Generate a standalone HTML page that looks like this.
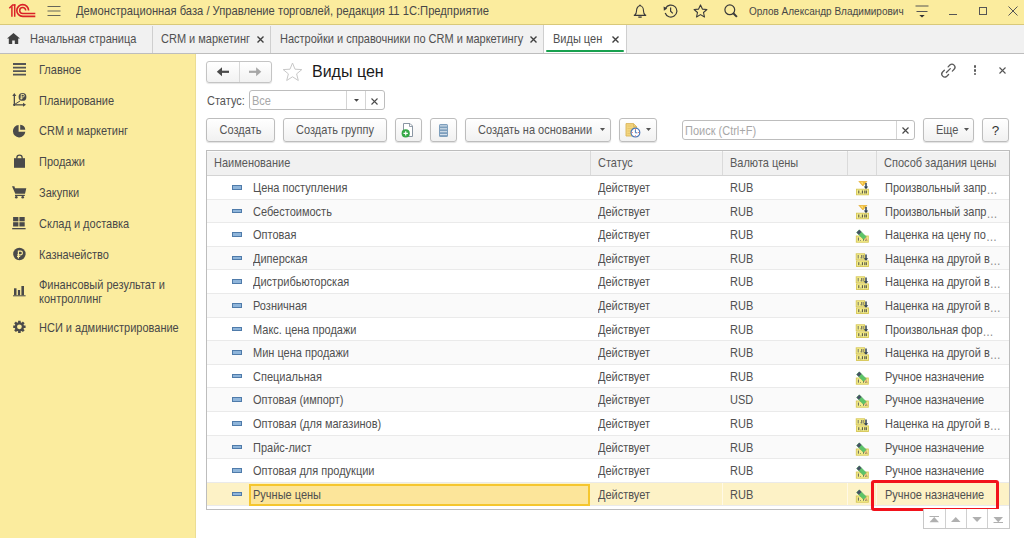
<!DOCTYPE html>
<html><head><meta charset="utf-8">
<style>
*{margin:0;padding:0;box-sizing:border-box}
html,body{width:1024px;height:538px;overflow:hidden;background:#fff;font-family:"Liberation Sans",sans-serif;font-size:11px;color:#4D4D4D}
.abs{position:absolute}
.ty{display:inline-block;transform:scaleY(1.12)}
#top{position:absolute;left:0;top:0;width:1024px;height:25px;background:#FBEC9E;border-bottom:1px solid #D9C97A}
#tabs{position:absolute;left:0;top:25px;width:1024px;height:29px;background:#F1F1F1;border-bottom:1px solid #BDBDBD}
.tab{position:absolute;top:0;height:28px;line-height:28px;white-space:nowrap;color:#505050;transform:scaleY(1.12)}
.sep{position:absolute;top:1px;width:1px;height:27px;background:#CFCFCF}
#side{position:absolute;left:0;top:54px;width:196px;height:484px;background:#FBEC9E;border-right:1px solid #EBDD95}
.si{position:absolute;left:39px;white-space:nowrap;line-height:13px;color:#484848;transform:scaleY(1.12)}
.sic{position:absolute;left:12px}
.btn{position:absolute;top:118px;height:24px;border:1px solid #BDBDBD;border-radius:3px;background:linear-gradient(#FFFFFF,#F1F1F1);box-shadow:0 1px 1px rgba(0,0,0,0.12);line-height:22px;text-align:center;white-space:nowrap;color:#555}
.row{position:absolute;left:207px;width:802px;border-bottom:1px solid #EAEAEA;white-space:nowrap;color:#505050}
.row span{position:absolute;top:1px;line-height:23px}
.ricon{left:25px;top:9px !important;width:10px;height:4.6px;background:#8FB5DA;border:1px solid #4F7BAA}
.c1,.c2,.c3,.c5{transform:scaleY(1.12)} .c1{left:46px} .c2{left:391px} .c3{left:523px} .c4{left:648px;top:5px !important;line-height:0 !important} .c5{left:678px}
.cur{position:absolute;left:42px;top:1px;width:341px;height:22px;background:#FCE59A;border:2px solid #F5C62E}
</style></head><body>
<div id="top">
  <svg class="abs" style="left:0;top:0" width="40" height="22" viewBox="0 0 40 22">
    <path d="M11.9 16.7V6.2M14.7 16.7V4.3" stroke="#DA2128" stroke-width="1.5" fill="none"/>
    <path d="M9.3 8.2L12.6 5h2.8" stroke="#DA2128" stroke-width="1.5" fill="none"/>
    <path d="M28.6 10.5A5.9 5.9 0 1 0 22.7 16.4H35.3" fill="none" stroke="#DA2128" stroke-width="1.6"/>
    <path d="M25.7 10.5A3.0 3.0 0 1 0 22.7 13.5H35.3" fill="none" stroke="#DA2128" stroke-width="1.5"/>
  </svg>
  <svg class="abs" style="left:47px;top:5px" width="14" height="12" viewBox="0 0 14 12"><path d="M0.5 1.5h13M0.5 6h13M0.5 10.5h13" stroke="#66665A" stroke-width="1.2"/></svg>
  <div class="abs ty" style="left:76px;top:0;line-height:23px;font-size:11.2px;color:#474747;white-space:nowrap">Демонстрационная база / Управление торговлей, редакция 11 1С:Предприятие</div>
  <svg class="abs" style="left:633px;top:4px" width="14" height="14" viewBox="0 0 14 14"><path d="M0.8 11.4h12.4M1.6 11.2c1.3-1 1.9-2 1.9-4.2 0-2.8 1.5-5.2 3.5-5.2s3.5 2.4 3.5 5.2c0 2.2.6 3.2 1.9 4.2" fill="none" stroke="#3A3A3A" stroke-width="1.1"/><path d="M5.3 13.1h3.4" stroke="#3A3A3A" stroke-width="1.3"/><path d="M6.2 1.3h1.6" stroke="#3A3A3A" stroke-width="1.2"/></svg>
  <svg class="abs" style="left:663px;top:4px" width="15" height="14" viewBox="0 0 15 14"><path d="M2.6 4.2A6 6 0 1 1 2.2 9" fill="none" stroke="#3A3A3A" stroke-width="1.2"/><path d="M0.6 2.6l3.6 1.9-3.3 2.2z" fill="#3A3A3A"/><path d="M7.6 3.6v3.6l2.2 2.2" fill="none" stroke="#3A3A3A" stroke-width="1.2"/></svg>
  <svg class="abs" style="left:693px;top:4px" width="15" height="14" viewBox="0 0 15 14"><path d="M7.5 0.9l1.9 4.2 4.5.4-3.4 3 1 4.5-4-2.4-4 2.4 1-4.5-3.4-3 4.5-.4z" fill="none" stroke="#3A3A3A" stroke-width="1.1" stroke-linejoin="round"/></svg>
  <svg class="abs" style="left:724px;top:4px" width="14" height="14" viewBox="0 0 14 14"><circle cx="5.8" cy="5.8" r="4.9" fill="none" stroke="#3A3A3A" stroke-width="1.2"/><path d="M9.3 9.3l3.6 3.6" stroke="#3A3A3A" stroke-width="2"/></svg>
  <div class="abs" style="left:749px;top:0;line-height:23px;font-size:10px;color:#474747;white-space:nowrap">Орлов Александр Владимирович</div>
  <svg class="abs" style="left:915px;top:5px" width="14" height="13" viewBox="0 0 14 13"><path d="M0.5 1h13M1.5 6.5h11" stroke="#555" stroke-width="1"/><path d="M4.3 10h5.4l-2.7 2.6z" fill="#333"/></svg>
  <div class="abs" style="left:949px;top:14px;width:8px;height:1px;background:#555"></div>
  <div class="abs" style="left:979px;top:7px;width:8px;height:8px;border:1px solid #555"></div>
  <svg class="abs" style="left:1008px;top:6px" width="10" height="10" viewBox="0 0 10 10"><path d="M0.5 0.5l9 9M9.5 0.5l-9 9" stroke="#555" stroke-width="1"/></svg>
</div>
<div id="tabs">
  <svg class="abs" style="left:7px;top:7.5px" width="13" height="11" viewBox="0 0 13 11"><path d="M6.5 0L0 5.6h1.8V11h3.4V7.6h2.6V11h3.4V5.6H13z" fill="#404040"/></svg>
  <div class="tab" style="left:30px">Начальная страница</div>
  <div class="sep" style="left:152px"></div>
  <div class="tab" style="left:161px">CRM и маркетинг</div>
  <svg class="abs" style="left:257px;top:10.5px" width="7" height="7" viewBox="0 0 7 7"><path d="M0.5 0.5l6 6M6.5 0.5l-6 6" stroke="#404040" stroke-width="1.4"/></svg>
  <div class="sep" style="left:270px"></div>
  <div class="tab" style="left:280px">Настройки и справочники по CRM и маркетингу</div>
  <svg class="abs" style="left:530px;top:10.5px" width="7" height="7" viewBox="0 0 7 7"><path d="M0.5 0.5l6 6M6.5 0.5l-6 6" stroke="#404040" stroke-width="1.4"/></svg>
  <div class="abs" style="left:543px;top:0;width:84px;height:28px;background:#fff;border-left:1px solid #CFCFCF;border-right:1px solid #CFCFCF"></div>
  <div class="abs" style="left:546px;top:25px;width:78px;height:2px;border-radius:1px;background:#17A04E"></div>
  <div class="tab" style="left:553px">Виды цен</div>
  <svg class="abs" style="left:612px;top:10.5px" width="7" height="7" viewBox="0 0 7 7"><path d="M0.5 0.5l6 6M6.5 0.5l-6 6" stroke="#404040" stroke-width="1.4"/></svg>
</div>
<div id="side">
  <svg class="sic" style="top:9px;left:13px" width="13" height="13" viewBox="0 0 13 13"><path d="M0 1h13M0 4.6h13M0 8.2h13M0 11.7h13" stroke="#555" stroke-width="1.8"/></svg>
  <div class="si" style="top:10px">Главное</div>
  <svg class="abs" style="left:0;top:0" width="40" height="300" viewBox="0 54 40 300">
    <g fill="#4A4A4A" stroke="none">
      <!-- planning -->
      <path d="M14.3 93l-2 3h4z"/><rect x="13.7" y="95" width="1.3" height="11"/>
      <path d="M26 104.8l-3-2v4z"/><rect x="13" y="104.2" width="10" height="1.3"/>
      <path d="M14.5 104.5l5.5-3.5" stroke="#4A4A4A" stroke-width="1"/>
      <circle cx="22.5" cy="96.9" r="3.9"/>
      <path d="M21.2 99.6v-5.2h1.8a1.3 1.3 0 0 1 0 2.6h-2.2M20.5 98.4h2" stroke="#FBEC9E" stroke-width="0.9" fill="none"/>
      <!-- pie -->
      <path d="M18.6 125a6.2 6.2 0 1 0 6.7 6.7h-6.7z"/>
      <path d="M20.2 124.7a5.4 5.4 0 0 1 5.1 5.1h-5.1z"/>
      <!-- bag -->
      <rect x="14" y="158.2" width="11" height="9.6"/>
      <path d="M16.8 159.5v-1.6a2.7 2.7 0 0 1 5.4 0v1.6" fill="none" stroke="#4A4A4A" stroke-width="1.3"/>
      <!-- cart -->
      <path d="M12 186.2h2.4l0.6 2h11.3l-1.3 5.6H15.3z"/>
      <rect x="15" y="194.8" width="9.8" height="1.2"/>
      <circle cx="16.3" cy="197.3" r="1.3"/><circle cx="22.7" cy="197.3" r="1.3"/>
      <!-- warehouse -->
      <rect x="13.1" y="217" width="5.3" height="4.3"/><rect x="19.4" y="217" width="5.3" height="4.3"/>
      <rect x="13.1" y="222.2" width="5.3" height="4.3"/><rect x="19.4" y="222.2" width="5.3" height="4.3"/>
      <rect x="12.2" y="228" width="13.4" height="1.3"/>
      <!-- ruble -->
      <circle cx="19.4" cy="254" r="6.2"/>
      <path d="M18.4 258.5v-7.3h2.2a1.8 1.8 0 0 1 0 3.6h-3.3M17 256.5h3.2" stroke="#FBEC9E" stroke-width="1.2" fill="none"/>
      <!-- chart -->
      <rect x="14" y="288.3" width="2.5" height="7"/><rect x="17.9" y="290" width="2.2" height="5.3"/><rect x="21.4" y="286" width="2.6" height="9.3"/>
      <rect x="13" y="295.3" width="12.6" height="1"/>
      <!-- gear -->
      <path d="M18.09 322.29 L18.12 320.63 L20.68 320.63 L20.71 322.29 L21.66 322.68 L22.86 321.53 L24.67 323.34 L23.52 324.54 L23.91 325.49 L25.57 325.52 L25.57 328.08 L23.91 328.11 L23.52 329.06 L24.67 330.26 L22.86 332.07 L21.66 330.92 L20.71 331.31 L20.68 332.97 L18.12 332.97 L18.09 331.31 L17.14 330.92 L15.94 332.07 L14.13 330.26 L15.28 329.06 L14.89 328.11 L13.23 328.08 L13.23 325.52 L14.89 325.49 L15.28 324.54 L14.13 323.34 L15.94 321.53 L17.14 322.68z"/>
      <circle cx="19.4" cy="326.8" r="2.4" fill="#FBEC9E"/>
    </g>
  </svg>
  <div class="si" style="top:41px">Планирование</div>
  <div class="si" style="top:71px">CRM и маркетинг</div>
  <div class="si" style="top:102px">Продажи</div>
  <div class="si" style="top:133px">Закупки</div>
  <div class="si" style="top:164px">Склад и доставка</div>
  <div class="si" style="top:195px">Казначейство</div>
  <div class="si" style="top:225px">Финансовый результат и<br>контроллинг</div>
  <div class="si" style="top:268px">НСИ и администрирование</div>
</div>
<!-- form header -->
<div class="abs" style="left:206px;top:61px;width:66px;height:22px;border:1px solid #C4C4C4;border-radius:3px;background:linear-gradient(#FFFFFF,#F2F2F2);box-shadow:0 1px 1px rgba(0,0,0,0.1)"></div>
<div class="abs" style="left:239px;top:62px;width:1px;height:20px;background:#D8D8D8"></div>
<svg class="abs" style="left:204px;top:58px" width="72" height="28" viewBox="204 58 72 28"><path d="M221 71.8h8" stroke="#4A4A4A" stroke-width="2.2"/><path d="M216.8 71.8l5.2-4.5v9z" fill="#4A4A4A"/><path d="M249 71.8h8" stroke="#A6A6A6" stroke-width="2.2"/><path d="M261.3 71.8l-5.2-4.5v9z" fill="#A6A6A6"/></svg>
<svg class="abs" style="left:282px;top:62px" width="21" height="20" viewBox="0 0 21 20"><path d="M10.5 1l2.5 6.2 6.8.4-5.2 4.3 1.7 6.6-5.8-3.7-5.8 3.7 1.7-6.6L1.2 7.6l6.8-.4z" fill="none" stroke="#C8C8C8" stroke-width="1" stroke-linejoin="round"/></svg>
<div class="abs" style="left:312px;top:60px;font-size:16px;line-height:24px;color:#1A1A1A;white-space:nowrap">Виды цен</div>
<svg class="abs" style="left:936px;top:60px" width="24" height="22" viewBox="936 60 24 22"><path d="M948.11 66.85L949.88 65.08A3.0 3.0 0 0 1 954.12 69.32L952.35 71.09 M948.59 74.45L946.82 76.22A3.0 3.0 0 0 1 942.58 71.98L944.35 70.21 M946.4 72.5L950.3 68.6" fill="none" stroke="#5A5A5A" stroke-width="1.3" stroke-linecap="round"/></svg>
<div class="abs" style="left:973.5px;top:65.2px;width:2.7px;height:2.7px;border-radius:2px;background:#5A5A5A"></div>
<div class="abs" style="left:973.5px;top:69px;width:2.7px;height:2.7px;border-radius:2px;background:#5A5A5A"></div>
<div class="abs" style="left:973.5px;top:72.8px;width:2.7px;height:2.7px;border-radius:2px;background:#5A5A5A"></div>
<svg class="abs" style="left:999px;top:67px" width="7" height="7" viewBox="0 0 7 7"><path d="M0.5 0.5l6 6M6.5 0.5l-6 6" stroke="#555" stroke-width="1.1"/></svg>
<!-- status filter -->
<div class="abs ty" style="left:207px;top:93px;line-height:16px;white-space:nowrap;color:#555">Статус:</div>
<div class="abs" style="left:249px;top:90px;width:136px;height:20px;border:1px solid #BDBDBD;border-radius:3px;background:#fff"></div>
<div class="abs ty" style="left:252px;top:92px;line-height:18px;color:#A8A8A8;white-space:nowrap">Все</div>
<div class="abs" style="left:346px;top:91px;width:1px;height:18px;background:#D4D4D4"></div>
<div class="abs" style="left:365px;top:91px;width:1px;height:18px;background:#D4D4D4"></div>
<svg class="abs" style="left:353.5px;top:99.2px" width="5" height="3" viewBox="0 0 5 3"><path d="M0 0h5L2.5 2.8z" fill="#444"/></svg>
<svg class="abs" style="left:371px;top:97.5px" width="7" height="7" viewBox="0 0 7 7"><path d="M0.5 0.5l6 6M6.5 0.5l-6 6" stroke="#4A4A4A" stroke-width="1.1"/></svg>
<!-- toolbar -->
<div class="btn" style="left:206px;width:69px"><span class="ty">Создать</span></div>
<div class="btn" style="left:283px;width:104px"><span class="ty">Создать группу</span></div>
<div class="btn" style="left:395px;width:27px"></div>
<svg class="abs" style="left:400px;top:122px" width="16" height="17" viewBox="0 0 16 17"><path d="M3.5 1.5h6.5l2.5 2.5v10.5h-9z" fill="#fff" stroke="#8A96A3" stroke-width="1"/><path d="M9.5 1.5v3h3" fill="none" stroke="#8A96A3" stroke-width="0.9"/><circle cx="5.7" cy="11.4" r="4.1" fill="#34A846"/><path d="M5.7 9.2v4.4M3.5 11.4h4.4" stroke="#fff" stroke-width="1.2"/></svg>
<div class="btn" style="left:430px;width:27px"></div>
<svg class="abs" style="left:439px;top:124px" width="9" height="13" viewBox="0 0 9 13"><rect x="0" y="0" width="9" height="13" rx="1.5" fill="#7E9FBD"/><path d="M1 1.9h7M1 4.8h7M1 7.7h7M1 10.6h7" stroke="#E6EEF5" stroke-width="0.9"/></svg>
<div class="btn" style="left:465px;width:146px;text-align:left;padding-left:12px"><span class="ty">Создать на основании</span></div>
<svg class="abs" style="left:600px;top:128px" width="5" height="3" viewBox="0 0 5 3"><path d="M0 0h5L2.5 3z" fill="#555"/></svg>
<div class="btn" style="left:619px;width:38px"></div>
<svg class="abs" style="left:625px;top:123px" width="16" height="15" viewBox="0 0 16 15"><path d="M1 0.6h7.5l3 3v9.4H1z" fill="#F3D57E" stroke="#D9B45A" stroke-width="0.9"/><path d="M8.5 0.6v3h3" fill="none" stroke="#D9B45A" stroke-width="0.8"/><path d="M2.5 3h4M2.5 5.5h6M2.5 8h5M2.5 10.5h3" stroke="#E3C26A" stroke-width="0.8"/><circle cx="10.4" cy="9.6" r="4.4" fill="#fff" stroke="#4A78B8" stroke-width="1.2"/><path d="M10.4 7v2.8h2" fill="none" stroke="#4A78B8" stroke-width="1"/><circle cx="10.4" cy="6.4" r="0.5" fill="#E04040"/><circle cx="10.4" cy="12.8" r="0.5" fill="#E04040"/><circle cx="7.2" cy="9.6" r="0.5" fill="#E04040"/><circle cx="13.6" cy="9.6" r="0.5" fill="#E04040"/></svg>
<svg class="abs" style="left:646px;top:128px" width="5" height="3" viewBox="0 0 5 3"><path d="M0 0h5L2.5 3z" fill="#555"/></svg>
<div class="abs" style="left:682px;top:120px;width:233px;height:20px;border:1px solid #BDBDBD;border-radius:3px;background:#fff"></div>
<div class="abs ty" style="left:685px;top:122px;line-height:18px;color:#A8A8A8;white-space:nowrap">Поиск (Ctrl+F)</div>
<div class="abs" style="left:896px;top:121px;width:1px;height:18px;background:#D4D4D4"></div>
<svg class="abs" style="left:902px;top:127px" width="7" height="7" viewBox="0 0 7 7"><path d="M0.5 0.5l6 6M6.5 0.5l-6 6" stroke="#4A4A4A" stroke-width="1.2"/></svg>
<div class="btn" style="left:923px;width:51px;text-align:left;padding-left:12px"><span class="ty">Еще</span></div>
<svg class="abs" style="left:964px;top:128px" width="5" height="3" viewBox="0 0 5 3"><path d="M0 0h5L2.5 3z" fill="#555"/></svg>
<div class="btn" style="left:982px;width:27px;color:#333;font-size:13.5px;line-height:23px">?</div>
<!-- table -->
<div class="abs" style="left:206px;top:150px;width:804px;height:360px;border:1px solid #BDBDBD;background:#fff"></div>
<div class="abs" style="left:207px;top:151px;width:802px;height:25px;background:#F1F1F1;border-top:1px solid #FAFAFA;border-bottom:1px solid #D4D4D4"></div>
<div class="abs" style="left:590px;top:151px;width:1px;height:24px;background:#DADADA"></div>
<div class="abs" style="left:722px;top:151px;width:1px;height:24px;background:#DADADA"></div>
<div class="abs" style="left:847px;top:151px;width:1px;height:24px;background:#DADADA"></div>
<div class="abs" style="left:876px;top:151px;width:1px;height:24px;background:#DADADA"></div>
<div class="abs" style="left:214px;top:151px;line-height:24px;white-space:nowrap;color:#595959;transform:scaleY(1.12)">Наименование</div>
<div class="abs" style="left:598px;top:151px;line-height:24px;white-space:nowrap;color:#595959;transform:scaleY(1.12)">Статус</div>
<div class="abs" style="left:730px;top:151px;line-height:24px;white-space:nowrap;color:#595959;transform:scaleY(1.12)">Валюта цены</div>
<div class="abs" style="left:884px;top:151px;line-height:24px;white-space:nowrap;color:#595959;transform:scaleY(1.12)">Способ задания цены</div>
<div class="row" style="top:176.00px;height:23.60px;background:#FFFFFF">
<span class="ricon"></span>
<span class="c1">Цена поступления</span><span class="c2">Действует</span><span class="c3">RUB</span><span class="c4"><svg width="14" height="15" viewBox="0 0 14 15"><path d="M3.8 0.3h8.2L7.9 5z" fill="#F3C13A" stroke="#E0A830" stroke-width="0.6"/><path d="M7.9 1.3L5.6 1.3 7.9 3.6z" fill="#FBE38A"/><rect x="1.5" y="8.2" width="12" height="5.6" fill="#F4EE8C" stroke="#D6C655" stroke-width="0.9"/><path d="M11 2v4.5" stroke="#2F4050" stroke-width="1.5"/><path d="M8.8 5.6h4.4L11 8.2z" fill="#2F4050"/><path d="M3.8 9.5v3M5.6 12.3h.6M7.4 9.5v3M9.8 9.5v3M11.3 9.5v3" stroke="#3A3A3A" stroke-width="0.9"/></svg></span><span class="c5">Произвольный запр<span style="color:#8A8A8A">…</span></span>
</div>
<div class="row" style="top:199.60px;height:23.60px;background:#FAFAFA">
<span class="ricon"></span>
<span class="c1">Себестоимость</span><span class="c2">Действует</span><span class="c3">RUB</span><span class="c4"><svg width="14" height="15" viewBox="0 0 14 15"><path d="M3.8 0.3h8.2L7.9 5z" fill="#F3C13A" stroke="#E0A830" stroke-width="0.6"/><path d="M7.9 1.3L5.6 1.3 7.9 3.6z" fill="#FBE38A"/><rect x="1.5" y="8.2" width="12" height="5.6" fill="#F4EE8C" stroke="#D6C655" stroke-width="0.9"/><path d="M11 2v4.5" stroke="#2F4050" stroke-width="1.5"/><path d="M8.8 5.6h4.4L11 8.2z" fill="#2F4050"/><path d="M3.8 9.5v3M5.6 12.3h.6M7.4 9.5v3M9.8 9.5v3M11.3 9.5v3" stroke="#3A3A3A" stroke-width="0.9"/></svg></span><span class="c5">Произвольный запр<span style="color:#8A8A8A">…</span></span>
</div>
<div class="row" style="top:223.20px;height:23.60px;background:#FFFFFF">
<span class="ricon"></span>
<span class="c1">Оптовая</span><span class="c2">Действует</span><span class="c3">RUB</span><span class="c4"><svg width="14" height="15" viewBox="0 0 14 15"><rect x="1.3" y="8" width="12" height="6.2" fill="#F4EE8C" stroke="#D6C655" stroke-width="0.9"/><path d="M3.4 9.5v3.2M5.4 12.5h.6M8.5 11v1.7M10.5 11v1.7" stroke="#555" stroke-width="0.9"/><path d="M4.3 1.8L1.6 4.5 8.7 11.6 11.4 8.9z" fill="#5CC468" stroke="#45A552" stroke-width="0.5"/><path d="M4.3 1.8L1.6 4.5 3.8 6.7 6.5 4z" fill="#475266"/><path d="M8.7 11.6L11.4 8.9 12.9 13.1z" fill="#E3B878"/><path d="M11.6 11.4l0.8 1.2-1.2-.4z" fill="#333"/></svg></span><span class="c5">Наценка на цену по<span style="color:#8A8A8A">…</span></span>
</div>
<div class="row" style="top:246.80px;height:23.60px;background:#FAFAFA">
<span class="ricon"></span>
<span class="c1">Диперская</span><span class="c2">Действует</span><span class="c3">RUB</span><span class="c4"><svg width="14" height="15" viewBox="0 0 14 15"><rect x="1.2" y="1.8" width="8.4" height="6" fill="#F4EE8C" stroke="#D6C655" stroke-width="0.9"/><path d="M3.2 3v3.5M5 5.8h.6M6.6 3v3.5M8.2 3v3.5" stroke="#555" stroke-width="0.8"/><rect x="1.5" y="8.9" width="12" height="5.6" fill="#F4EE8C" stroke="#D6C655" stroke-width="0.9"/><path d="M3.8 10.2v3M5.6 13h.6M7.4 10.2v3M9.8 10.2v3M11.3 10.2v3" stroke="#3A3A3A" stroke-width="0.9"/><path d="M11 2.6v4.5" stroke="#2F4050" stroke-width="1.5"/><path d="M8.8 6.2h4.4L11 8.8z" fill="#2F4050"/></svg></span><span class="c5">Наценка на другой в<span style="color:#8A8A8A">…</span></span>
</div>
<div class="row" style="top:270.40px;height:23.60px;background:#FFFFFF">
<span class="ricon"></span>
<span class="c1">Дистрибьюторская</span><span class="c2">Действует</span><span class="c3">RUB</span><span class="c4"><svg width="14" height="15" viewBox="0 0 14 15"><rect x="1.2" y="1.8" width="8.4" height="6" fill="#F4EE8C" stroke="#D6C655" stroke-width="0.9"/><path d="M3.2 3v3.5M5 5.8h.6M6.6 3v3.5M8.2 3v3.5" stroke="#555" stroke-width="0.8"/><rect x="1.5" y="8.9" width="12" height="5.6" fill="#F4EE8C" stroke="#D6C655" stroke-width="0.9"/><path d="M3.8 10.2v3M5.6 13h.6M7.4 10.2v3M9.8 10.2v3M11.3 10.2v3" stroke="#3A3A3A" stroke-width="0.9"/><path d="M11 2.6v4.5" stroke="#2F4050" stroke-width="1.5"/><path d="M8.8 6.2h4.4L11 8.8z" fill="#2F4050"/></svg></span><span class="c5">Наценка на другой в<span style="color:#8A8A8A">…</span></span>
</div>
<div class="row" style="top:294.00px;height:23.60px;background:#FAFAFA">
<span class="ricon"></span>
<span class="c1">Розничная</span><span class="c2">Действует</span><span class="c3">RUB</span><span class="c4"><svg width="14" height="15" viewBox="0 0 14 15"><rect x="1.2" y="1.8" width="8.4" height="6" fill="#F4EE8C" stroke="#D6C655" stroke-width="0.9"/><path d="M3.2 3v3.5M5 5.8h.6M6.6 3v3.5M8.2 3v3.5" stroke="#555" stroke-width="0.8"/><rect x="1.5" y="8.9" width="12" height="5.6" fill="#F4EE8C" stroke="#D6C655" stroke-width="0.9"/><path d="M3.8 10.2v3M5.6 13h.6M7.4 10.2v3M9.8 10.2v3M11.3 10.2v3" stroke="#3A3A3A" stroke-width="0.9"/><path d="M11 2.6v4.5" stroke="#2F4050" stroke-width="1.5"/><path d="M8.8 6.2h4.4L11 8.8z" fill="#2F4050"/></svg></span><span class="c5">Наценка на другой в<span style="color:#8A8A8A">…</span></span>
</div>
<div class="row" style="top:317.60px;height:23.60px;background:#FFFFFF">
<span class="ricon"></span>
<span class="c1">Макс. цена продажи</span><span class="c2">Действует</span><span class="c3">RUB</span><span class="c4"><svg width="14" height="15" viewBox="0 0 14 15"><rect x="1.2" y="1.8" width="8.4" height="6" fill="#F4EE8C" stroke="#D6C655" stroke-width="0.9"/><path d="M3.2 3v3.5M5 5.8h.6M6.6 3v3.5M8.2 3v3.5" stroke="#555" stroke-width="0.8"/><rect x="1.5" y="8.9" width="12" height="5.6" fill="#F4EE8C" stroke="#D6C655" stroke-width="0.9"/><path d="M3.8 10.2v3M5.6 13h.6M7.4 10.2v3M9.8 10.2v3M11.3 10.2v3" stroke="#3A3A3A" stroke-width="0.9"/><path d="M11 2.6v4.5" stroke="#2F4050" stroke-width="1.5"/><path d="M8.8 6.2h4.4L11 8.8z" fill="#2F4050"/></svg></span><span class="c5">Произвольная фор<span style="color:#8A8A8A">…</span></span>
</div>
<div class="row" style="top:341.20px;height:23.60px;background:#FAFAFA">
<span class="ricon"></span>
<span class="c1">Мин цена продажи</span><span class="c2">Действует</span><span class="c3">RUB</span><span class="c4"><svg width="14" height="15" viewBox="0 0 14 15"><rect x="1.2" y="1.8" width="8.4" height="6" fill="#F4EE8C" stroke="#D6C655" stroke-width="0.9"/><path d="M3.2 3v3.5M5 5.8h.6M6.6 3v3.5M8.2 3v3.5" stroke="#555" stroke-width="0.8"/><rect x="1.5" y="8.9" width="12" height="5.6" fill="#F4EE8C" stroke="#D6C655" stroke-width="0.9"/><path d="M3.8 10.2v3M5.6 13h.6M7.4 10.2v3M9.8 10.2v3M11.3 10.2v3" stroke="#3A3A3A" stroke-width="0.9"/><path d="M11 2.6v4.5" stroke="#2F4050" stroke-width="1.5"/><path d="M8.8 6.2h4.4L11 8.8z" fill="#2F4050"/></svg></span><span class="c5">Наценка на другой в<span style="color:#8A8A8A">…</span></span>
</div>
<div class="row" style="top:364.80px;height:23.60px;background:#FFFFFF">
<span class="ricon"></span>
<span class="c1">Специальная</span><span class="c2">Действует</span><span class="c3">RUB</span><span class="c4"><svg width="14" height="15" viewBox="0 0 14 15"><rect x="1.3" y="8" width="12" height="6.2" fill="#F4EE8C" stroke="#D6C655" stroke-width="0.9"/><path d="M3.4 9.5v3.2M5.4 12.5h.6M8.5 11v1.7M10.5 11v1.7" stroke="#555" stroke-width="0.9"/><path d="M4.3 1.8L1.6 4.5 8.7 11.6 11.4 8.9z" fill="#5CC468" stroke="#45A552" stroke-width="0.5"/><path d="M4.3 1.8L1.6 4.5 3.8 6.7 6.5 4z" fill="#475266"/><path d="M8.7 11.6L11.4 8.9 12.9 13.1z" fill="#E3B878"/><path d="M11.6 11.4l0.8 1.2-1.2-.4z" fill="#333"/></svg></span><span class="c5">Ручное назначение</span>
</div>
<div class="row" style="top:388.40px;height:23.60px;background:#FAFAFA">
<span class="ricon"></span>
<span class="c1">Оптовая (импорт)</span><span class="c2">Действует</span><span class="c3">USD</span><span class="c4"><svg width="14" height="15" viewBox="0 0 14 15"><rect x="1.3" y="8" width="12" height="6.2" fill="#F4EE8C" stroke="#D6C655" stroke-width="0.9"/><path d="M3.4 9.5v3.2M5.4 12.5h.6M8.5 11v1.7M10.5 11v1.7" stroke="#555" stroke-width="0.9"/><path d="M4.3 1.8L1.6 4.5 8.7 11.6 11.4 8.9z" fill="#5CC468" stroke="#45A552" stroke-width="0.5"/><path d="M4.3 1.8L1.6 4.5 3.8 6.7 6.5 4z" fill="#475266"/><path d="M8.7 11.6L11.4 8.9 12.9 13.1z" fill="#E3B878"/><path d="M11.6 11.4l0.8 1.2-1.2-.4z" fill="#333"/></svg></span><span class="c5">Ручное назначение</span>
</div>
<div class="row" style="top:412.00px;height:23.60px;background:#FFFFFF">
<span class="ricon"></span>
<span class="c1">Оптовая (для магазинов)</span><span class="c2">Действует</span><span class="c3">RUB</span><span class="c4"><svg width="14" height="15" viewBox="0 0 14 15"><rect x="1.2" y="1.8" width="8.4" height="6" fill="#F4EE8C" stroke="#D6C655" stroke-width="0.9"/><path d="M3.2 3v3.5M5 5.8h.6M6.6 3v3.5M8.2 3v3.5" stroke="#555" stroke-width="0.8"/><rect x="1.5" y="8.9" width="12" height="5.6" fill="#F4EE8C" stroke="#D6C655" stroke-width="0.9"/><path d="M3.8 10.2v3M5.6 13h.6M7.4 10.2v3M9.8 10.2v3M11.3 10.2v3" stroke="#3A3A3A" stroke-width="0.9"/><path d="M11 2.6v4.5" stroke="#2F4050" stroke-width="1.5"/><path d="M8.8 6.2h4.4L11 8.8z" fill="#2F4050"/></svg></span><span class="c5">Наценка на другой в<span style="color:#8A8A8A">…</span></span>
</div>
<div class="row" style="top:435.60px;height:23.60px;background:#FAFAFA">
<span class="ricon"></span>
<span class="c1">Прайс-лист</span><span class="c2">Действует</span><span class="c3">RUB</span><span class="c4"><svg width="14" height="15" viewBox="0 0 14 15"><rect x="1.3" y="8" width="12" height="6.2" fill="#F4EE8C" stroke="#D6C655" stroke-width="0.9"/><path d="M3.4 9.5v3.2M5.4 12.5h.6M8.5 11v1.7M10.5 11v1.7" stroke="#555" stroke-width="0.9"/><path d="M4.3 1.8L1.6 4.5 8.7 11.6 11.4 8.9z" fill="#5CC468" stroke="#45A552" stroke-width="0.5"/><path d="M4.3 1.8L1.6 4.5 3.8 6.7 6.5 4z" fill="#475266"/><path d="M8.7 11.6L11.4 8.9 12.9 13.1z" fill="#E3B878"/><path d="M11.6 11.4l0.8 1.2-1.2-.4z" fill="#333"/></svg></span><span class="c5">Ручное назначение</span>
</div>
<div class="row" style="top:459.20px;height:23.60px;background:#FFFFFF">
<span class="ricon"></span>
<span class="c1">Оптовая для продукции</span><span class="c2">Действует</span><span class="c3">RUB</span><span class="c4"><svg width="14" height="15" viewBox="0 0 14 15"><rect x="1.3" y="8" width="12" height="6.2" fill="#F4EE8C" stroke="#D6C655" stroke-width="0.9"/><path d="M3.4 9.5v3.2M5.4 12.5h.6M8.5 11v1.7M10.5 11v1.7" stroke="#555" stroke-width="0.9"/><path d="M4.3 1.8L1.6 4.5 8.7 11.6 11.4 8.9z" fill="#5CC468" stroke="#45A552" stroke-width="0.5"/><path d="M4.3 1.8L1.6 4.5 3.8 6.7 6.5 4z" fill="#475266"/><path d="M8.7 11.6L11.4 8.9 12.9 13.1z" fill="#E3B878"/><path d="M11.6 11.4l0.8 1.2-1.2-.4z" fill="#333"/></svg></span><span class="c5">Ручное назначение</span>
</div>
<div class="row" style="top:482.80px;height:23.60px;background:#FDF2C6">
<span class="ricon"></span>
<div class="cur"></div>
<div style="position:absolute;left:515px;top:0;width:1px;height:100%;background:#FFF9E6"></div>
<div style="position:absolute;left:640px;top:0;width:1px;height:100%;background:#FFF9E6"></div>
<div style="position:absolute;left:669px;top:0;width:1px;height:100%;background:#FFF9E6"></div>
<span class="c1">Ручные цены</span><span class="c2">Действует</span><span class="c3">RUB</span><span class="c4"><svg width="14" height="15" viewBox="0 0 14 15"><rect x="1.3" y="8" width="12" height="6.2" fill="#F4EE8C" stroke="#D6C655" stroke-width="0.9"/><path d="M3.4 9.5v3.2M5.4 12.5h.6M8.5 11v1.7M10.5 11v1.7" stroke="#555" stroke-width="0.9"/><path d="M4.3 1.8L1.6 4.5 8.7 11.6 11.4 8.9z" fill="#5CC468" stroke="#45A552" stroke-width="0.5"/><path d="M4.3 1.8L1.6 4.5 3.8 6.7 6.5 4z" fill="#475266"/><path d="M8.7 11.6L11.4 8.9 12.9 13.1z" fill="#E3B878"/><path d="M11.6 11.4l0.8 1.2-1.2-.4z" fill="#333"/></svg></span><span class="c5">Ручное назначение</span>
</div>
<div class="abs" style="left:871px;top:480px;width:128px;height:31px;border:3px solid #F2121B;border-radius:3px"></div>
<!-- scroll buttons -->
<div class="abs" style="left:923px;top:509px;width:87px;height:20px;border:1px solid #C8C8C8;border-top:none;background:#fff"></div>
<div class="abs" style="left:945px;top:509px;width:1px;height:19px;background:#D0D0D0"></div>
<div class="abs" style="left:966px;top:509px;width:1px;height:19px;background:#D0D0D0"></div>
<div class="abs" style="left:987px;top:509px;width:1px;height:19px;background:#D0D0D0"></div>
<svg class="abs" style="left:920px;top:505px" width="94" height="27" viewBox="920 505 94 27" fill="#B0B0B0"><path d="M929.5 516h9.5v1h-9.5z"/><path d="M929.5 522.3h9.5l-4.75-5.3z"/><path d="M951 522h9.5l-4.75-5z"/><path d="M972.3 517h9.5l-4.75 5z"/><path d="M993.5 517h9.5l-4.75 5.3z"/><path d="M993.5 522h9.5v1h-9.5z"/></svg>
</body></html>
